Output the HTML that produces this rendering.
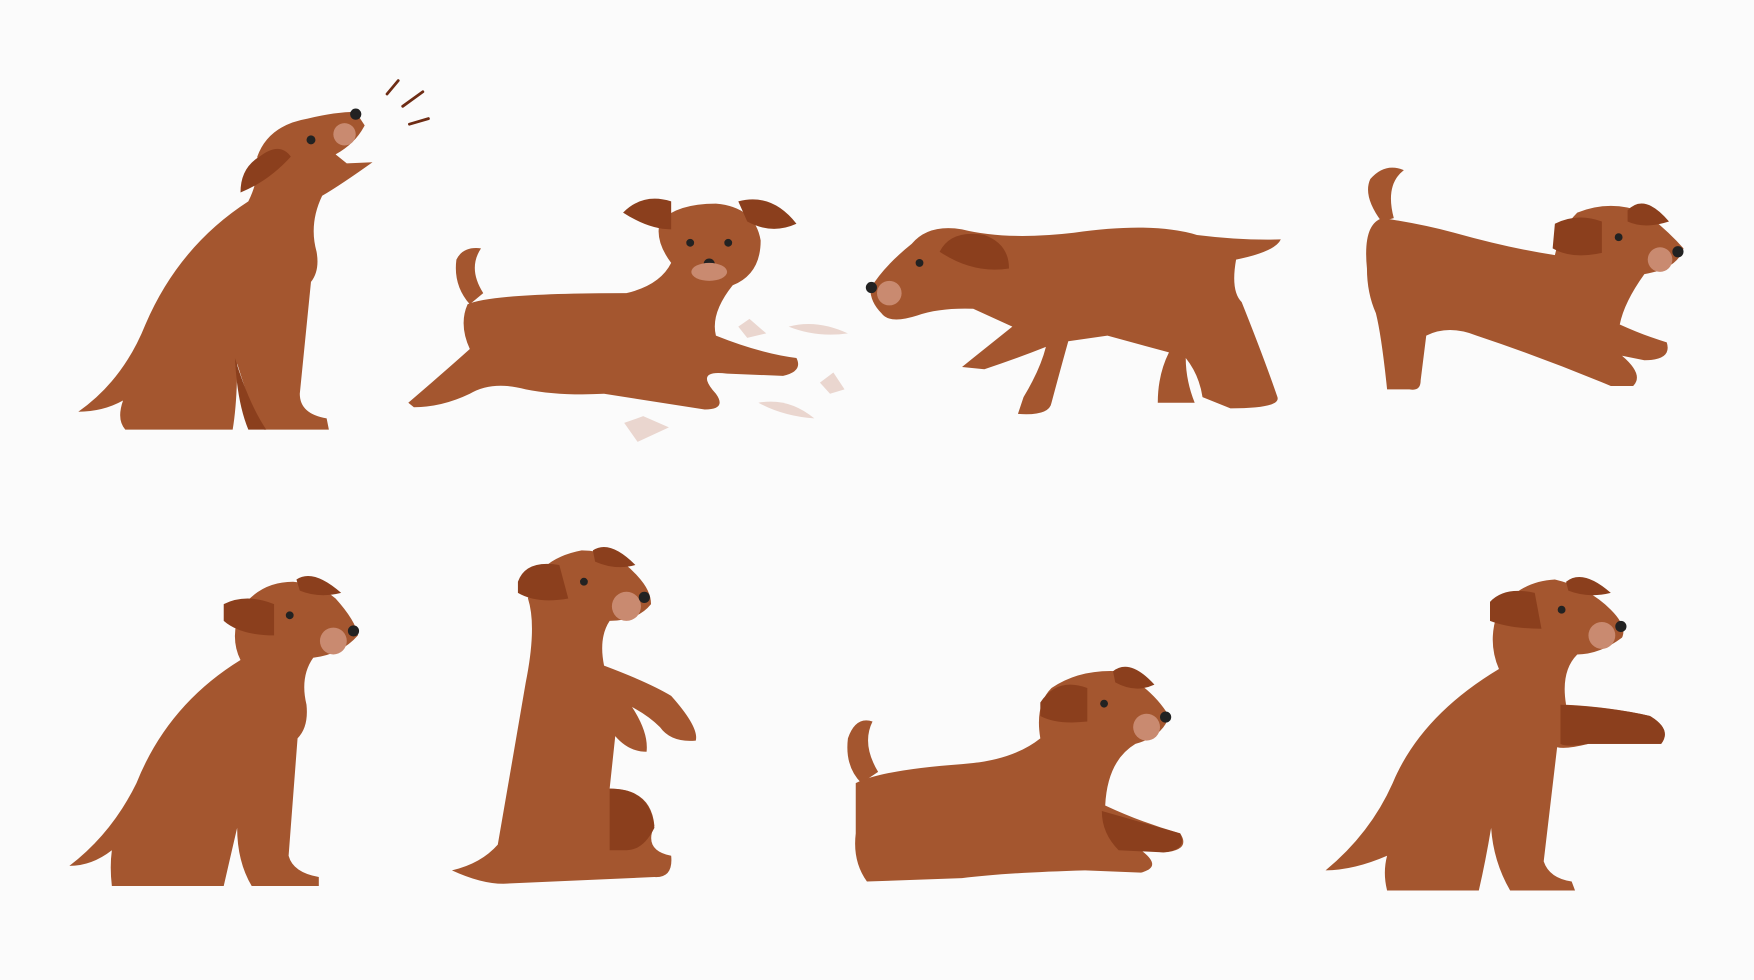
<!DOCTYPE html>
<html><head><style>html,body{margin:0;padding:0;background:#fbfbfb;width:1754px;height:980px;overflow:hidden}svg{display:block}</style></head>
<body>
<svg width="1754" height="980" viewBox="0 0 1568 876" xmlns="http://www.w3.org/2000/svg">
<rect width="1568" height="876" fill="#fbfbfb"/>
<g fill="#a4562f" stroke="none">
<!-- Dog 1 -->
<path d="M70,368 Q110,340 130,290 Q160,220 222,180 Q232,160 230,140 Q240,112 275,106 Q300,100 318,100 L326,112 Q318,128 300,138 L310,146 L333,145 Q305,165 288,175 Q276,200 283,225 Q286,242 278,252 L268,352 Q268,370 292,374 L294,384 L236,384 Q225,378 220,350 L212,325 Q212,360 208,384 L112,384 Q104,375 110,358 Q92,368 70,368Z"/>
<path d="M232,140 Q215,150 215,172 Q240,162 260,140 Q250,126 232,140Z" fill="#8b3f1d"/>
<circle cx="308" cy="120" r="10" fill="#c98a70"/>
<path d="M210,320 Q222,360 238,384 L222,384 Q212,360 210,320Z" fill="#8b3f1d"/>
<!-- Dog 2 -->
<path d="M365,360 Q400,330 420,312 Q410,290 418,272 Q440,262 560,262 Q590,255 600,235 Q585,215 590,198 Q605,182 640,182 Q675,185 680,215 Q680,245 655,255 Q635,280 640,300 Q680,316 712,320 Q718,332 700,336 L650,334 Q620,330 640,352 Q650,366 630,366 L540,352 Q500,354 470,348 Q440,340 420,352 Q395,364 370,364Z"/>
<path d="M420,272 Q405,255 408,232 Q414,220 430,222 Q418,240 432,262Z"/>
<path d="M557,190 Q575,172 600,180 L600,205 Q580,205 557,190Z M660,180 Q690,172 712,200 Q690,210 668,198Z" fill="#8b3f1d"/>
<circle cx="634" cy="236" r="5" fill="#222"/>
<ellipse cx="634" cy="243" rx="16" ry="8" fill="#c98a70"/>
<!-- Dog 3 -->
<path d="M778,258 Q790,238 815,218 Q830,200 860,205 Q900,215 960,208 Q1030,198 1070,210 Q1110,215 1145,214 Q1140,225 1105,232 Q1100,260 1110,270 Q1130,320 1142,355 Q1145,365 1100,365 L1075,355 Q1072,335 1060,320 Q1060,340 1068,360 L1035,360 Q1035,335 1045,315 L990,300 L955,305 Q948,330 940,360 Q938,372 910,370 L915,355 Q930,330 935,310 Q910,320 880,330 L860,328 Q880,312 905,292 L870,276 Q840,275 820,282 Q795,290 788,280 Q778,270 778,258Z"/>
<path d="M840,225 Q850,205 880,210 Q902,218 902,240 Q870,245 840,225Z" fill="#8b3f1d"/>
<circle cx="795" cy="262" r="11" fill="#c98a70"/>
<!-- Dog 4 -->
<path d="M1222,240 Q1218,200 1236,195 Q1270,200 1300,208 Q1350,222 1390,228 Q1395,205 1410,190 Q1440,178 1470,190 Q1490,205 1505,222 Q1500,240 1470,245 Q1452,270 1448,290 Q1470,300 1490,306 Q1495,322 1470,322 L1450,318 Q1470,335 1460,345 L1440,345 Q1380,320 1320,300 Q1295,290 1275,300 L1270,340 Q1270,350 1260,348 L1240,348 Q1235,300 1230,280 Q1222,262 1222,240Z"/>
<path d="M1235,198 Q1218,175 1225,160 Q1238,145 1255,152 Q1238,165 1246,195Z"/>
<path d="M1390,200 Q1410,190 1432,198 L1432,226 Q1405,232 1388,222Z M1455,188 Q1470,172 1492,198 Q1470,205 1455,198Z" fill="#8b3f1d"/>
<circle cx="1484" cy="232" r="11" fill="#c98a70"/>
<!-- Dog 5 -->
<path d="M62,774 Q100,745 122,700 Q150,630 215,590 Q205,570 215,545 Q232,520 262,520 Q285,522 300,535 Q318,555 320,568 Q305,585 280,588 Q268,605 274,630 Q276,650 266,660 L258,765 Q262,780 285,784 L285,792 L225,792 Q212,770 212,740 Q205,770 200,792 L100,792 Q98,775 100,760 Q82,774 62,774Z"/>
<path d="M200,540 Q220,530 245,540 L245,568 Q215,568 200,555Z M265,518 Q280,508 305,530 Q285,535 268,528Z" fill="#8b3f1d"/>
<circle cx="298" cy="573" r="12" fill="#c98a70"/>
<!-- Dog 6 -->
<path d="M404,778 Q430,772 445,755 Q458,680 470,610 Q480,560 472,535 Q478,500 520,492 Q550,492 570,515 Q582,528 582,540 Q570,555 545,555 Q535,570 540,595 Q580,610 600,622 Q625,650 622,662 Q600,664 590,650 Q580,640 565,632 Q580,655 578,672 Q562,672 550,658 L545,705 Q582,705 585,738 Q575,760 600,765 Q602,785 585,784 L450,790 Q430,790 404,778Z"/>
<path d="M463,520 Q470,500 500,505 L508,535 Q480,540 463,530Z M530,492 Q545,482 568,505 Q550,510 532,502Z" fill="#8b3f1d"/>
<path d="M545,705 Q582,705 585,740 Q575,760 560,760 L545,760Z" fill="#8b3f1d"/>
<circle cx="560" cy="542" r="13" fill="#c98a70"/>
<!-- Dog 7 -->
<path d="M765,700 Q790,688 860,683 Q905,680 930,660 Q925,630 940,615 Q965,598 1000,600 Q1030,615 1045,640 Q1040,658 1015,665 Q990,680 988,720 Q1020,735 1055,745 Q1065,760 1040,762 L1020,760 Q1040,775 1020,780 L970,778 Q900,780 860,785 L775,788 Q762,770 765,745Z"/>
<path d="M770,700 Q755,685 758,660 Q765,640 780,645 Q770,665 785,690Z"/>
<path d="M930,628 Q945,605 972,615 L972,645 Q945,648 930,640Z M995,600 Q1010,588 1032,612 Q1015,620 997,610Z" fill="#8b3f1d"/>
<path d="M985,725 Q1020,735 1055,745 Q1062,760 1040,762 L1000,760 Q985,745 985,725Z" fill="#8b3f1d"/>
<circle cx="1025" cy="650" r="12" fill="#c98a70"/>
<!-- Dog 8 -->
<path d="M1185,778 Q1225,745 1245,700 Q1270,640 1340,598 Q1330,575 1338,550 Q1355,520 1390,518 Q1420,525 1440,545 Q1455,560 1450,570 Q1430,585 1410,585 Q1395,600 1400,630 Q1440,632 1475,640 Q1495,652 1485,665 L1420,665 Q1400,670 1392,668 L1380,770 Q1385,785 1405,788 L1408,796 L1350,796 Q1335,770 1333,740 Q1328,770 1322,796 L1240,796 Q1236,780 1240,765 Q1210,778 1185,778Z"/>
<path d="M1395,630 Q1440,632 1475,640 Q1495,652 1485,665 L1420,665 Q1400,668 1395,665Z" fill="#8b3f1d"/>
<path d="M1332,538 Q1345,524 1372,530 L1378,562 Q1350,562 1332,555Z M1400,520 Q1415,508 1440,530 Q1420,535 1402,528Z" fill="#8b3f1d"/>
<circle cx="1432" cy="568" r="12" fill="#c98a70"/>
</g>
<!-- eyes and noses -->
<g fill="#222">
<circle cx="278" cy="125" r="4"/><circle cx="318" cy="102" r="5"/>
<circle cx="617" cy="217" r="3.5"/><circle cx="651" cy="217" r="3.5"/>
<circle cx="822" cy="235" r="3.5"/><circle cx="779" cy="257" r="5"/>
<circle cx="1447" cy="212" r="3.5"/><circle cx="1500" cy="225" r="5"/>
<circle cx="259" cy="550" r="3.5"/><circle cx="316" cy="564" r="5"/>
<circle cx="522" cy="520" r="3.5"/><circle cx="576" cy="534" r="5"/>
<circle cx="987" cy="629" r="3.5"/><circle cx="1042" cy="641" r="5"/>
<circle cx="1396" cy="545" r="3.5"/><circle cx="1449" cy="560" r="5"/>
</g>
<g stroke="#6e2c14" stroke-width="2.5" stroke-linecap="round">
<line x1="346" y1="84" x2="356" y2="72"/><line x1="360" y1="95" x2="378" y2="82"/><line x1="366" y1="111" x2="383" y2="106"/>
</g>
<g fill="#ead6cf">
<path d="M705,292 Q730,285 758,298 Q730,302 705,292Z"/>
<path d="M678,360 Q705,355 728,374 Q700,372 678,360Z"/>
<path d="M558,378 L575,372 L598,382 L570,395Z"/>
<path d="M660,292 L670,285 L685,298 L668,302Z"/>
<path d="M733,342 L745,333 L755,348 L742,352Z"/>
</g>
</svg>
</body></html>
